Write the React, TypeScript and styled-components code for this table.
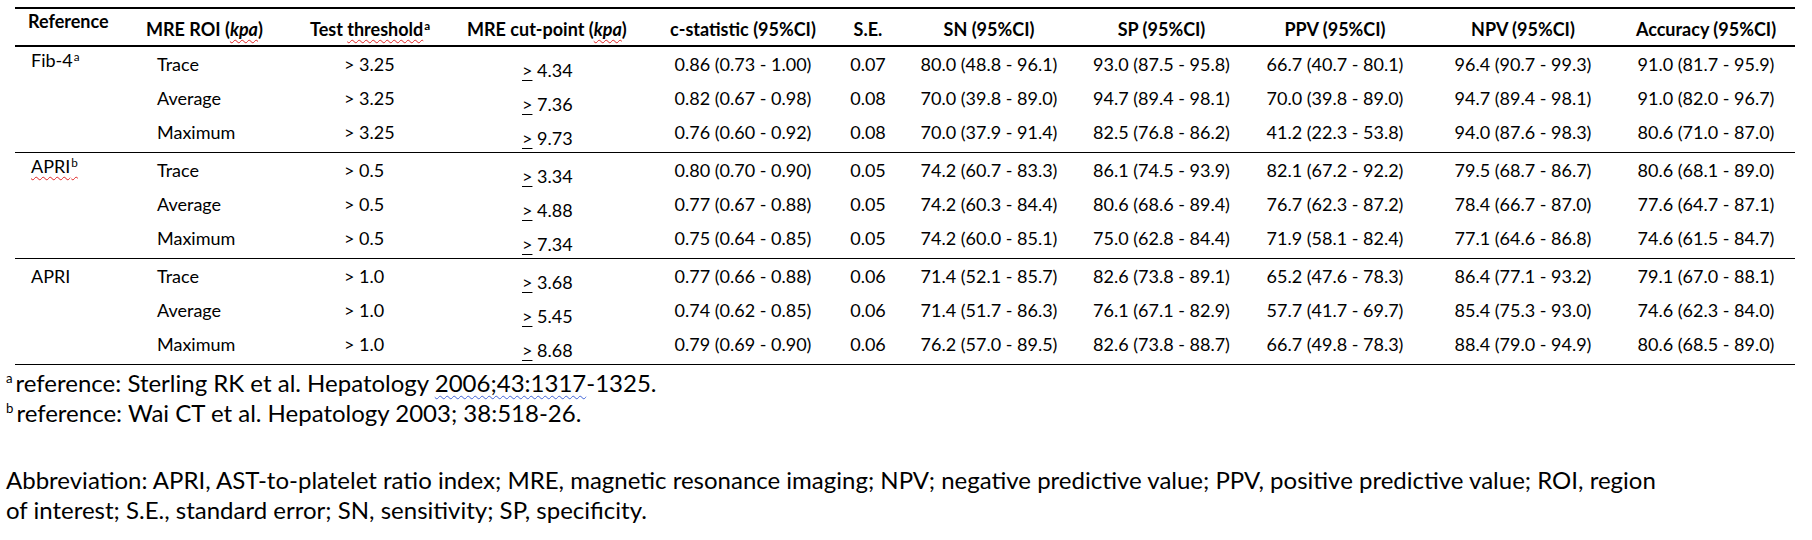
import React from "react";
import styled, { createGlobalStyle } from "styled-components";

const GlobalStyle = createGlobalStyle`
  html, body {
    margin: 0;
    padding: 0;
    background: #ffffff;
  }
  body {
    font-family: Lato, "Open Sans", sans-serif;
    color: #000000;
  }
`;

// column widths, taken from the Word table
const COLS = "120px 155px 165px 191px 194px 56px 186px 159px 188px 188px 178px";

type Group = {
  ref: string;
  sup?: string;
  spell?: boolean;
  thr: string;
  rows: string[][];
};

const groups: Group[] = [
  {
    ref: "Fib-4",
    sup: "a",
    thr: "> 3.25",
    rows: [
      ["Trace", "4.34", "0.86 (0.73 - 1.00)", "0.07", "80.0 (48.8 - 96.1)", "93.0 (87.5 - 95.8)", "66.7 (40.7 - 80.1)", "96.4 (90.7 - 99.3)", "91.0 (81.7 - 95.9)"],
      ["Average", "7.36", "0.82 (0.67 - 0.98)", "0.08", "70.0 (39.8 - 89.0)", "94.7 (89.4 - 98.1)", "70.0 (39.8 - 89.0)", "94.7 (89.4 - 98.1)", "91.0 (82.0 - 96.7)"],
      ["Maximum", "9.73", "0.76 (0.60 - 0.92)", "0.08", "70.0 (37.9 - 91.4)", "82.5 (76.8 - 86.2)", "41.2 (22.3 - 53.8)", "94.0 (87.6 - 98.3)", "80.6 (71.0 - 87.0)"],
    ],
  },
  {
    ref: "APRI",
    sup: "b",
    spell: true,
    thr: "> 0.5",
    rows: [
      ["Trace", "3.34", "0.80 (0.70 - 0.90)", "0.05", "74.2 (60.7 - 83.3)", "86.1 (74.5 - 93.9)", "82.1 (67.2 - 92.2)", "79.5 (68.7 - 86.7)", "80.6 (68.1 - 89.0)"],
      ["Average", "4.88", "0.77 (0.67 - 0.88)", "0.05", "74.2 (60.3 - 84.4)", "80.6 (68.6 - 89.4)", "76.7 (62.3 - 87.2)", "78.4 (66.7 - 87.0)", "77.6 (64.7 - 87.1)"],
      ["Maximum", "7.34", "0.75 (0.64 - 0.85)", "0.05", "74.2 (60.0 - 85.1)", "75.0 (62.8 - 84.4)", "71.9 (58.1 - 82.4)", "77.1 (64.6 - 86.8)", "74.6 (61.5 - 84.7)"],
    ],
  },
  {
    ref: "APRI",
    thr: "> 1.0",
    rows: [
      ["Trace", "3.68", "0.77 (0.66 - 0.88)", "0.06", "71.4 (52.1 - 85.7)", "82.6 (73.8 - 89.1)", "65.2 (47.6 - 78.3)", "86.4 (77.1 - 93.2)", "79.1 (67.0 - 88.1)"],
      ["Average", "5.45", "0.74 (0.62 - 0.85)", "0.06", "71.4 (51.7 - 86.3)", "76.1 (67.1 - 82.9)", "57.7 (41.7 - 69.7)", "85.4 (75.3 - 93.0)", "74.6 (62.3 - 84.0)"],
      ["Maximum", "8.68", "0.79 (0.69 - 0.90)", "0.06", "76.2 (57.0 - 89.5)", "82.6 (73.8 - 88.7)", "66.7 (49.8 - 78.3)", "88.4 (79.0 - 94.9)", "80.6 (68.5 - 89.0)"],
    ],
  },
];

const App: React.FC = () => {
  return (
    <Page>
      <GlobalStyle />
      <Table>
        <HeadRow>
          <HeadCell $pad={13} $top>
            <span>Reference</span>
          </HeadCell>
          <HeadCell $pad={11}>
            <span>
              MRE ROI (<Spell><i>kpa</i></Spell>)
            </span>
          </HeadCell>
          <HeadCell $pad={20}>
            <span>
              Test <Spell>threshold</Spell>
              <Sup>a</Sup>
            </span>
          </HeadCell>
          <HeadCell $pad={12}>
            <span>
              MRE cut-point (<Spell><i>kpa</i></Spell>)
            </span>
          </HeadCell>
          <HeadCell><span>c-statistic (95%CI)</span></HeadCell>
          <HeadCell><span>S.E.</span></HeadCell>
          <HeadCell><span>SN (95%CI)</span></HeadCell>
          <HeadCell><span>SP (95%CI)</span></HeadCell>
          <HeadCell><span>PPV (95%CI)</span></HeadCell>
          <HeadCell><span>NPV (95%CI)</span></HeadCell>
          <HeadCell><span>Accuracy (95%CI)</span></HeadCell>
        </HeadRow>
        {groups.map((g, gi) => (
          <GroupBlock key={gi}>
            {g.rows.map((r, ri) => (
              <Row key={ri}>
                <Cell $pad={16} $raise={ri === 0 && !!g.sup}>
                  {ri === 0 && (
                    <span>
                      {g.spell ? (
                        <Spell>
                          {g.ref}
                          <Sup>{g.sup}</Sup>
                        </Spell>
                      ) : (
                        <>
                          {g.ref}
                          {g.sup && <Sup>{g.sup}</Sup>}
                        </>
                      )}
                    </span>
                  )}
                </Cell>
                <Cell $pad={22}><span>{r[0]}</span></Cell>
                <Cell $pad={54}><span>{g.thr}</span></Cell>
                <Cell $pad={67} $drop>
                  <span>
                    <Ge>&gt;</Ge> {r[1]}
                  </span>
                </Cell>
                {r.slice(2).map((v, vi) => (
                  <Cell key={vi}><span>{v}</span></Cell>
                ))}
              </Row>
            ))}
          </GroupBlock>
        ))}
      </Table>
      <Notes>
        <NoteLine>
          <NoteSup>a</NoteSup>reference: Sterling RK et al. Hepatology{" "}
          <Grammar>2006;43:1317</Grammar>-1325.
        </NoteLine>
        <NoteLine>
          <NoteSup>b</NoteSup>reference: Wai CT et al. Hepatology 2003; 38:518-26.
        </NoteLine>
        <Abbrev>
          Abbreviation: APRI, AST-to-platelet ratio index; MRE, magnetic resonance imaging; NPV;
          negative predictive value; PPV, positive predictive value; ROI, region
          <br />
          of interest; S.E., standard error; SN, sensitivity; SP, specificity.
        </Abbrev>
      </Notes>
    </Page>
  );
};

const Page = styled.div`
  width: 1812px;
  height: 540px;
  padding-top: 7px;
  box-sizing: border-box;
  overflow: hidden;
`;

const Table = styled.div`
  margin-left: 15px;
  width: 1780px;
  border-top: 2px solid #000;
  border-bottom: 1px solid #000;
`;

const HeadRow = styled.div`
  display: grid;
  grid-template-columns: ${COLS};
  height: 36px;
  border-bottom: 2px solid #000;
  font-size: 18px;
  font-weight: 700;
  line-height: 20px;
`;

const HeadCell = styled.div<{ $pad?: number; $top?: boolean }>`
  display: flex;
  align-items: ${({ $top }) => ($top ? "flex-start" : "flex-end")};
  justify-content: ${({ $pad }) => ($pad !== undefined ? "flex-start" : "center")};
  padding-left: ${({ $pad }) => $pad ?? 0}px;
  padding-top: ${({ $top }) => ($top ? "2px" : "0")};
  padding-bottom: ${({ $top }) => ($top ? "0" : "6px")};
  white-space: nowrap;
`;

const GroupBlock = styled.div`
  padding: 1px 0 2px;
  & + & {
    border-top: 1px solid #000;
  }
`;

const Row = styled.div`
  display: grid;
  grid-template-columns: ${COLS};
  height: 34px;
  font-size: 18px;
  line-height: 20px;
`;

const Cell = styled.div<{ $pad?: number; $drop?: boolean; $raise?: boolean }>`
  display: flex;
  align-items: center;
  justify-content: ${({ $pad }) => ($pad !== undefined ? "flex-start" : "center")};
  padding-left: ${({ $pad }) => $pad ?? 0}px;
  padding-top: ${({ $drop }) => ($drop ? "10px" : "0")};
  padding-bottom: ${({ $raise, $drop }) => ($raise ? "10px" : $drop ? "0" : "2px")};
  white-space: nowrap;
`;

const Sup = styled.sup`
  font-size: 0.65em;
  line-height: 0;
  vertical-align: 0.55em;
  margin-left: 1px;
`;

const Spell = styled.span`
  text-decoration: underline wavy #e02424;
  text-decoration-thickness: 1px;
  text-underline-offset: 3px;
`;

const Grammar = styled.span`
  text-decoration: underline wavy #3f62d6;
  text-decoration-thickness: 1px;
  text-underline-offset: 3px;
`;

const Ge = styled.span`
  text-decoration: underline;
  text-decoration-thickness: 1px;
  text-underline-offset: 3px;
`;

const Notes = styled.div`
  padding: 3px 0 0 6px;
  font-size: 24px;
  line-height: 30px;
  white-space: nowrap;
`;

const NoteLine = styled.div``;

const NoteSup = styled.sup`
  display: inline-block;
  font-size: 0.55em;
  line-height: 0;
  vertical-align: 0.65em;
  margin-right: 3px;
`;

const Abbrev = styled.div`
  margin-top: 37px;
`;

export default App;
